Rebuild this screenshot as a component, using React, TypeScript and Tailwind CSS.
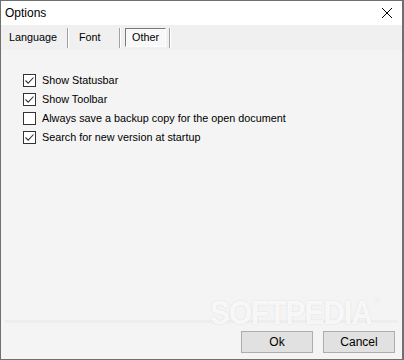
const options = [
  { label: 'Show Statusbar', checked: true },
  { label: 'Show Toolbar', checked: true },
  { label: 'Always save a backup copy for the open document', checked: false },
  { label: 'Search for new version at startup', checked: true },
];

function CheckBox({ checked }: { checked: boolean }) {
  return (
    <span className="flex h-[13px] w-[13px] shrink-0 items-center justify-center border border-[#333333] bg-white">
      {checked && (
        <svg width="11" height="11" viewBox="0 0 11 11">
          <path d="M1.5 5.5 L4.2 8.2 L9.5 2.5" fill="none" stroke="#333333" strokeWidth="1.1" />
        </svg>
      )}
    </span>
  );
}

function Separator() {
  return <span className="h-[20px] w-[2px] border-l border-[#a0a0a0] border-r border-r-white" />;
}

export default function App() {
  return (
    <div className="relative flex h-[360px] w-[404px] flex-col overflow-hidden border border-r-2 border-[#6f6f6f] bg-[#f4f4f4] font-['Liberation_Sans',Arial,sans-serif] text-[10.8px] text-black">
      {/* Title bar */}
      <div className="flex h-[24px] shrink-0 items-center justify-between bg-white pl-[4px] pr-[8px]">
        <span className="text-[12px]">Options</span>
        <svg width="12" height="12" viewBox="0 0 12 12" className="mr-[1px]">
          <path d="M1 1 L11 11 M11 1 L1 11" stroke="#000" strokeWidth="1" />
        </svg>
      </div>

      {/* Tabs */}
      <div className="flex h-[25px] shrink-0 items-center bg-[#f0f0f0] pl-[8px]">
        <span className="w-[58px]">Language</span>
        <Separator />
        <span className="w-[50px] pl-[10px]">Font</span>
        <Separator />
        <span className="ml-[4px] mr-[3px] flex h-[19px] w-[41px] items-center justify-center border border-[#7a7a7a] border-b-white border-r-white bg-[#f8f8f8]">
          Other
        </span>
        <Separator />
      </div>

      {/* Tab panel */}
      <div className="mx-[4px] flex flex-1 flex-col gap-[6px] border-b-[3px] border-[#eeeeee] bg-[#f4f4f4] pl-[18px] pt-[24px]">
        {options.map(o => (
          <label key={o.label} className="flex h-[13px] items-center gap-[6px]">
            <CheckBox checked={o.checked} />
            <span>{o.label}</span>
          </label>
        ))}
      </div>

      {/* Buttons */}
      <div className="flex h-[36px] shrink-0 items-start justify-end gap-[10px] pr-[7px] pt-[8px]">
        <button type="button" className="h-[22px] w-[72px] border border-[#adadad] bg-[#e1e1e1] text-[12px]">
          Ok
        </button>
        <button type="button" className="h-[22px] w-[72px] border border-[#adadad] bg-[#e1e1e1] text-[12px]">
          Cancel
        </button>
      </div>

      {/* Watermark */}
      <span className="pointer-events-none absolute left-[209px] top-[295px] origin-left scale-x-[0.9] text-[33px] font-bold leading-none tracking-[-1px] text-white/80 [text-shadow:0_0_2px_rgba(0,0,0,0.12)]">
        SOFTPEDIA
      </span>
      <span className="pointer-events-none absolute left-[374px] top-[296px] text-[7px] leading-none text-white/80 [text-shadow:0_0_1px_rgba(0,0,0,0.15)]">
        ®
      </span>
    </div>
  );
}
